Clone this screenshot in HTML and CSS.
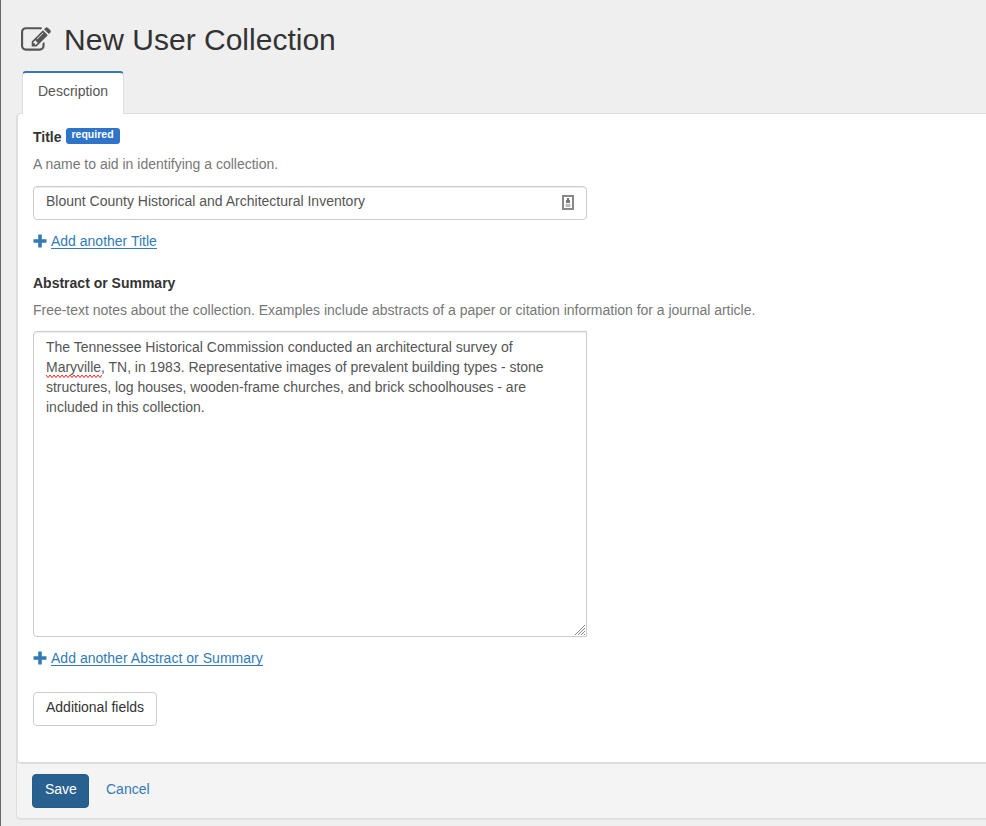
FILE: index.html
```html
<!DOCTYPE html>
<html lang="en">
<head>
<meta charset="utf-8">
<title>New User Collection</title>
<link rel="stylesheet" href="styles.css">
</head>
<body>
<main class="page">
  <h1 class="heading">
    <svg class="heading-icon" viewBox="0 0 1792 1792" aria-hidden="true"><path d="M888 1184l116-116-152-152-116 116v56h96v96h56zm440-720q-16-16-33 1l-350 350q-17 17-1 33t33-1l350-350q17-17 1-33zm80 594v190q0 119-84.500 203.500t-203.500 84.500h-832q-119 0-203.500-84.500t-84.500-203.500v-832q0-119 84.500-203.500t203.500-84.500h832q63 0 117 25 15 7 18 23 3 17-9 29l-49 49q-14 14-32 8-23-6-45-6h-832q-66 0-113 47t-47 113v832q0 66 47 113t113 47h832q66 0 113-47t47-113v-126q0-13 9-22l64-64q15-15 35-7t20 29zm-96-738l288 288-672 672h-288v-288zm444 132l-92 92-288-288 92-92q28-28 68-28t68 28l152 152q28 28 28 68t-28 68z"/></svg>
    <span>New User Collection</span>
  </h1>
  <nav class="tabs"><a class="tab">Description</a></nav>
  <form class="card">
    <section class="panel">
      <div class="label">Title <span class="badge">required</span></div>
      <p class="help">A name to aid in identifying a collection.</p>
      <div class="control input" role="textbox">
        <span>Blount County Historical and Architectural Inventory</span>
        <svg class="autofill" viewBox="0 0 12 15" aria-hidden="true"><rect class="frame" x="1" y="1" width="10" height="13"/><path class="person" d="M5 3h2v2h1v3H4V5h1z"/><path class="lines" d="M3.500 9h5v3h-5z"/></svg>
      </div>
      <div class="add"><svg class="plus" viewBox="0 0 14 14" aria-hidden="true"><path d="M5.200.5h3.600v4.700h4.700v3.600H8.800v4.700H5.200V8.800H.5V5.200h4.700z"/></svg><a>Add another Title</a></div>
      <div class="label label-second">Abstract or Summary</div>
      <p class="help help-long">Free-text notes about the collection. Examples include abstracts of a paper or citation information for a journal article.</p>
      <div class="control area" role="textbox">
        The Tennessee Historical Commission conducted an architectural survey of<br>
        <span class="tight"><span class="misspelled">Maryville<svg class="squiggle" width="56" height="5" aria-hidden="true"><defs><pattern id="wave" width="4" height="5" patternUnits="userSpaceOnUse"><path d="M-1 0l3 3.500 3-3.500"/></pattern></defs><rect width="56" height="5" fill="url(#wave)"/></svg></span>, TN, in 1983. Representative images of prevalent building types - stone</span><br>
        <span class="tight">structures, log houses, wooden-frame churches, and brick schoolhouses - are</span><br>
        included in this collection.
        <svg class="grip" viewBox="0 0 12 12" aria-hidden="true"><path d="M1 11L11 1M4 11l7-7M7 11l4-4M10 11l1-1"/></svg>
      </div>
      <div class="add add-wide"><svg class="plus" viewBox="0 0 14 14" aria-hidden="true"><path d="M5.200.5h3.600v4.700h4.700v3.600H8.800v4.700H5.200V8.800H.5V5.200h4.700z"/></svg><a>Add another Abstract or Summary</a></div>
      <button class="btn more" type="button">Additional fields</button>
    </section>
    <footer class="footer">
      <button class="btn save" type="button">Save</button>
      <a class="cancel">Cancel</a>
    </footer>
  </form>
</main>
</body>
</html>
```
FILE: styles.css
```css
* { box-sizing: border-box; }
body {
  margin: 0;
  background: #efefef;
  color: #333;
  font: 14px/20px "Liberation Sans", Arial, sans-serif;
  overflow: hidden;
}
.page {
  height: 826px;
  border-left: 1px solid #666;
  padding: 22px 0 0 15px;
}
.heading {
  display: flex;
  align-items: center;
  gap: 13px;
  height: 36px;
  margin: 0 0 13px 5px;
  font-size: 30px;
  font-weight: 400;
  line-height: 36px;
}
.heading-icon { width: 30px; height: 30px; fill: #555; }
.tabs { display: flex; height: 42px; padding-left: 6px; }
.tab {
  position: relative;
  z-index: 1;
  height: 43px;
  padding: 8px 15px 0;
  border: 1px solid #ddd;
  border-top: 2px solid #337ab7;
  border-bottom: 0;
  border-radius: 4px 4px 0 0;
  background: #fff;
  color: #555;
}
.card {
  width: 985px;
  height: 706px;
  margin: 0;
  border: 1px solid #ddd;
  border-radius: 4px;
  background: #f4f4f4;
  box-shadow: 0 1px 1px rgba(0, 0, 0, .05);
}
.panel {
  height: 650px;
  padding: 13px 15px 0;
  border: 1px solid #ddd;
  border-width: 0 0 2px 1px;
  border-radius: 4px;
  background: #fff;
}
.label { display: flex; gap: 4px; height: 20px; font-weight: 700; }
.badge {
  height: 16px;
  margin-top: 1px;
  padding: 0 6px;
  border-radius: 3px;
  background: #2e74c8;
  color: #fff;
  font-size: 10.5px;
  line-height: 13px;
}
.label-second { margin-top: 22px; }
.help { height: 20px; margin: 7px 0 12px; color: #777; }
.help-long { margin-bottom: 11px; letter-spacing: -.018px; }
.control {
  width: 554px;
  border: 1px solid #ccc;
  border-radius: 4px;
  background: #fff;
  color: #555;
  box-shadow: inset 0 1px 1px rgba(0, 0, 0, .075);
}
.input {
  display: flex;
  justify-content: space-between;
  height: 34px;
  padding: 4px 12px;
}
.autofill { width: 12px; height: 15px; margin-top: 4px; }
.frame { fill: #fff; stroke: #888; stroke-width: 2; }
.person { fill: #777; }
.lines { fill: #bbb; }
.area {
  position: relative;
  height: 306px;
  padding: 5px 12px;
  border-radius: 4px 0 0 4px;
  white-space: nowrap;
}
.tight { letter-spacing: -.022px; }
.misspelled { position: relative; }
.squiggle { position: absolute; left: 0; bottom: -4px; }
.squiggle path { fill: none; stroke: #e11; stroke-width: 1; }
.grip { position: absolute; right: 0; bottom: 0; width: 12px; height: 12px; }
.grip path { fill: none; stroke: #888; stroke-width: 1; }
.add {
  display: flex;
  align-items: flex-start;
  gap: 4px;
  height: 20px;
  margin-top: 11px;
  color: #337ab7;
}
.add-wide { letter-spacing: .03px; }
.plus { width: 14px; height: 14px; margin-top: 3px; fill: #337ab7; }
.add a { height: 18px; margin-top: 0; line-height: 20px; border-bottom: 1px solid #337ab7; }
.btn {
  height: 34px;
  padding: 0 12px 4px;
  border: 1px solid #ccc;
  border-radius: 4px;
  background: #fff;
  color: #333;
  font: inherit;
}
.more { margin-top: 24px; }
.footer { display: flex; align-items: center; gap: 17px; padding: 10px 15px; }
.save { width: 57px; border-color: #265c8b; background: #286090; color: #fff; }
.cancel { padding-bottom: 4px; color: #337ab7; }
```
